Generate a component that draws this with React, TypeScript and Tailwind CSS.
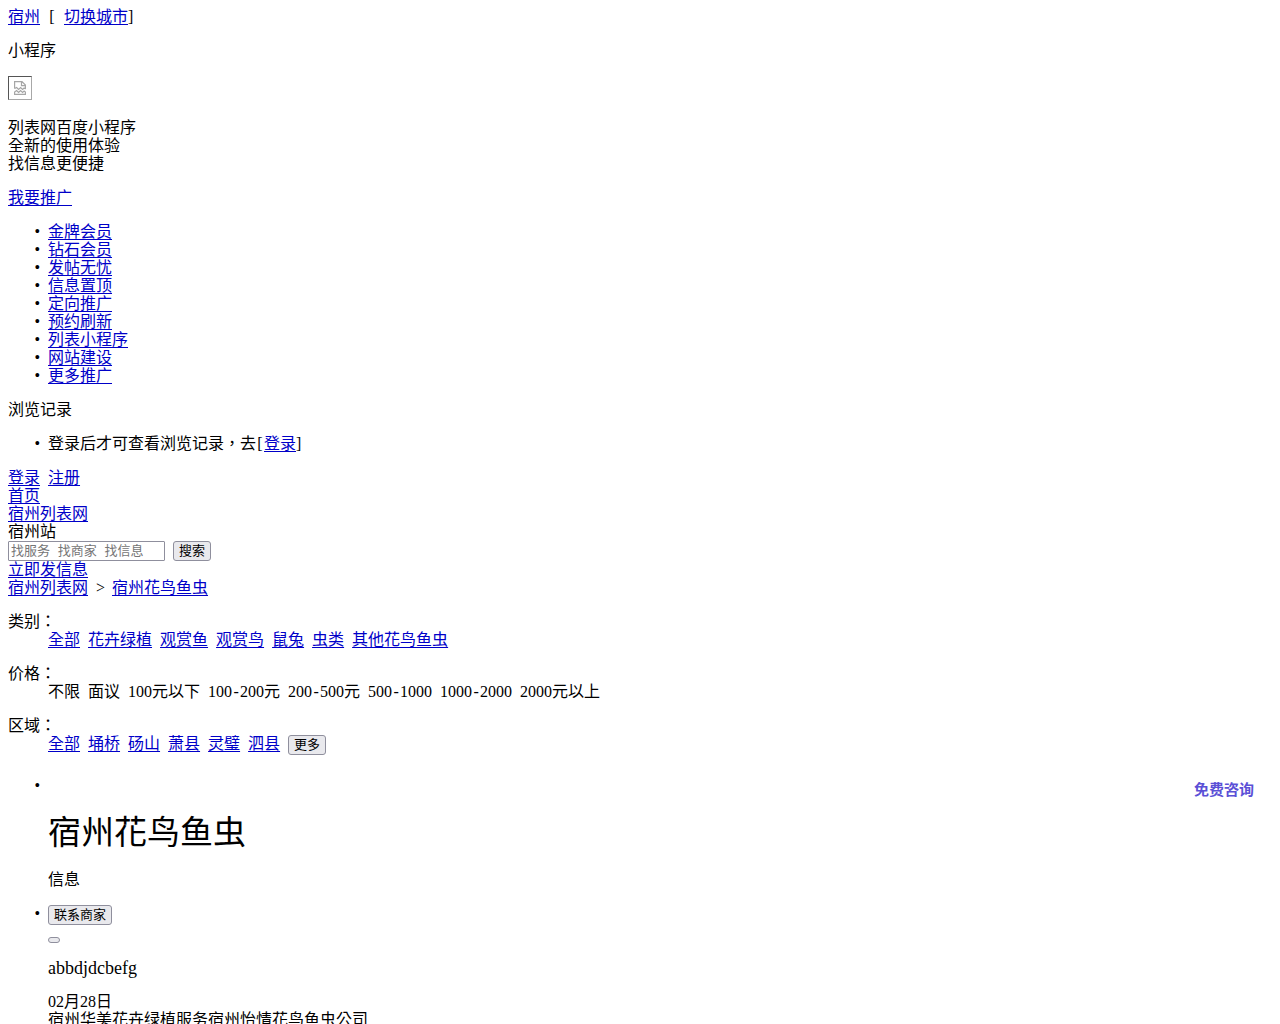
import { Fragment, type ReactNode } from "react";

type Props = {
  children: ReactNode;
};

const PROMOTIONS = [
  "金牌会员",
  "钻石会员",
  "发帖无忧",
  "信息置顶",
  "定向推广",
  "预约刷新",
  "列表小程序",
  "网站建设",
  "更多推广",
];

const CATEGORIES = ["全部", "花卉绿植", "观赏鱼", "观赏鸟", "鼠兔", "虫类", "其他花鸟鱼虫"];

const PRICES = [
  "不限",
  "面议",
  "100元以下",
  "100-200元",
  "200-500元",
  "500-1000",
  "1000-2000",
  "2000元以上",
];

const AREAS = ["全部", "埇桥", "砀山", "萧县", "灵璧", "泗县"];

function TextLink({ children }: Props) {
  return (
    <a href="#" className="text-[#0000c8] underline decoration-1 underline-offset-2">
      {children}
    </a>
  );
}

function SmallButton({ children }: Props) {
  return (
    <button
      type="button"
      className="h-5 rounded-[3px] border border-[#8f8f9d] bg-[#e9e9ed] px-[5px] text-[13px] leading-4"
    >
      {children}
    </button>
  );
}

function BulletList({ children }: Props) {
  return <ul className="my-4 list-['•__'] pl-10">{children}</ul>;
}

// half-width symbol that takes up exactly half a Chinese character
function HalfWidth({ children }: Props) {
  return <span className="inline-block w-2 text-center">{children}</span>;
}

function Price({ text }: { text: string }) {
  const parts = text.split("-");
  return (
    <span>
      {parts.map((part, i) => (
        <Fragment key={part}>
          {i > 0 && <HalfWidth>-</HalfWidth>}
          {part}
        </Fragment>
      ))}
    </span>
  );
}

// shown where the mini program QR code failed to load
function MissingImage() {
  return (
    <div
      role="img"
      className="flex size-6 items-center justify-center border border-[#a8a8a8] border-t-[#555] border-l-[#555]"
    >
      <svg viewBox="0 0 12 14" className="h-3.5 w-3" fill="none" stroke="#a6a6a6" strokeWidth="1.2">
        <path d="M.6 7.500V.6H8l3.400 3.400v4M7.500.6v4h4" />
        <path d="M.6 7.500l2-1 2 2 2-2 2 2 1.500-1.500 1.500 1" />
        <path d="M.6 13.400v-2.400l2-1.500 2 2 2-2 2 2 1.500-1.500 1.300 1v2.400z" />
      </svg>
    </div>
  );
}

function Filter({ label, children }: { label: string; children: ReactNode }) {
  return (
    <dl className="mt-4">
      <dt>{label}：</dt>
      <dd className="ml-10 flex flex-wrap items-start gap-x-2">{children}</dd>
    </dl>
  );
}

export default function App() {
  return (
    <main
      lang="zh-TW"
      className="bg-white p-2 font-['Liberation_Serif','Noto_Sans_CJK_TC',serif] text-base leading-[18px] text-black"
    >
      <div className="flex gap-2">
        <TextLink>宿州</TextLink>
        <HalfWidth>[</HalfWidth>
        <span>
          <TextLink>切换城市</TextLink>]
        </span>
      </div>
      <p className="my-4">小程序</p>
      <MissingImage />
      <p className="mt-[19px] mb-4">
        列表网百度小程序
        <br />
        全新的使用体验
        <br />
        找信息更便捷
      </p>
      <TextLink>我要推广</TextLink>
      <BulletList>
        {PROMOTIONS.map((name) => (
          <li key={name}>
            <TextLink>{name}</TextLink>
          </li>
        ))}
      </BulletList>
      <p>浏览记录</p>
      <BulletList>
        <li>
          登录后才可查看浏览记录，去<HalfWidth>[</HalfWidth>
          <TextLink>登录</TextLink>]
        </li>
      </BulletList>

      <div className="flex gap-2">
        <TextLink>登录</TextLink>
        <TextLink>注册</TextLink>
      </div>
      <div>
        <TextLink>首页</TextLink>
      </div>
      <div>
        <TextLink>宿州列表网</TextLink>
      </div>
      <div>宿州站</div>
      <form className="flex gap-2" onSubmit={(e) => e.preventDefault()}>
        <input
          type="text"
          aria-label="搜索"
          placeholder="找服务 找商家 找信息"
          className="h-5 w-[157px] rounded-[1px] border border-[#8f8f9d] px-0.5 font-['Liberation_Mono','Noto_Sans_CJK_TC',monospace] text-[13px] placeholder:text-[#757575]"
        />
        <SmallButton>搜索</SmallButton>
      </form>
      <div>
        <TextLink>立即发信息</TextLink>
      </div>
      <div className="flex gap-2">
        <TextLink>宿州列表网</TextLink>
        <HalfWidth>&gt;</HalfWidth>
        <TextLink>宿州花鸟鱼虫</TextLink>
      </div>

      <Filter label="类别">
        {CATEGORIES.map((name) => (
          <TextLink key={name}>{name}</TextLink>
        ))}
      </Filter>
      <Filter label="价格">
        {PRICES.map((text) => (
          <Price key={text} text={text} />
        ))}
      </Filter>
      <Filter label="区域">
        {AREAS.map((name) => (
          <TextLink key={name}>{name}</TextLink>
        ))}
        <SmallButton>更多</SmallButton>
      </Filter>

      <div className="pt-1.5">
        <BulletList>
          <li className="relative">
            &nbsp;
            {/* floats over the list, outside the heading flow */}
            <span className="absolute top-1 right-[18px] text-[15px] font-bold text-[#5b50d6]">免费咨询</span>
            <h1 className="my-5 text-[33px] leading-9">宿州花鸟鱼虫</h1>
            <p className="my-4">信息</p>
          </li>
          <li>
            <SmallButton>联系商家</SmallButton>
            <button
              type="button"
              aria-label="收藏"
              className="mt-3 block h-1.5 w-3 rounded-[3px] border border-[#8f8f9d] bg-[#e9e9ed]"
            />
            <p className="my-4 text-lg leading-[18px]">abbdjdcbefg</p>
            <div>02月28日</div>
            <div>宿州华美花卉绿植服务宿州怡情花鸟鱼虫公司</div>
          </li>
        </BulletList>
      </div>
    </main>
  );
}
